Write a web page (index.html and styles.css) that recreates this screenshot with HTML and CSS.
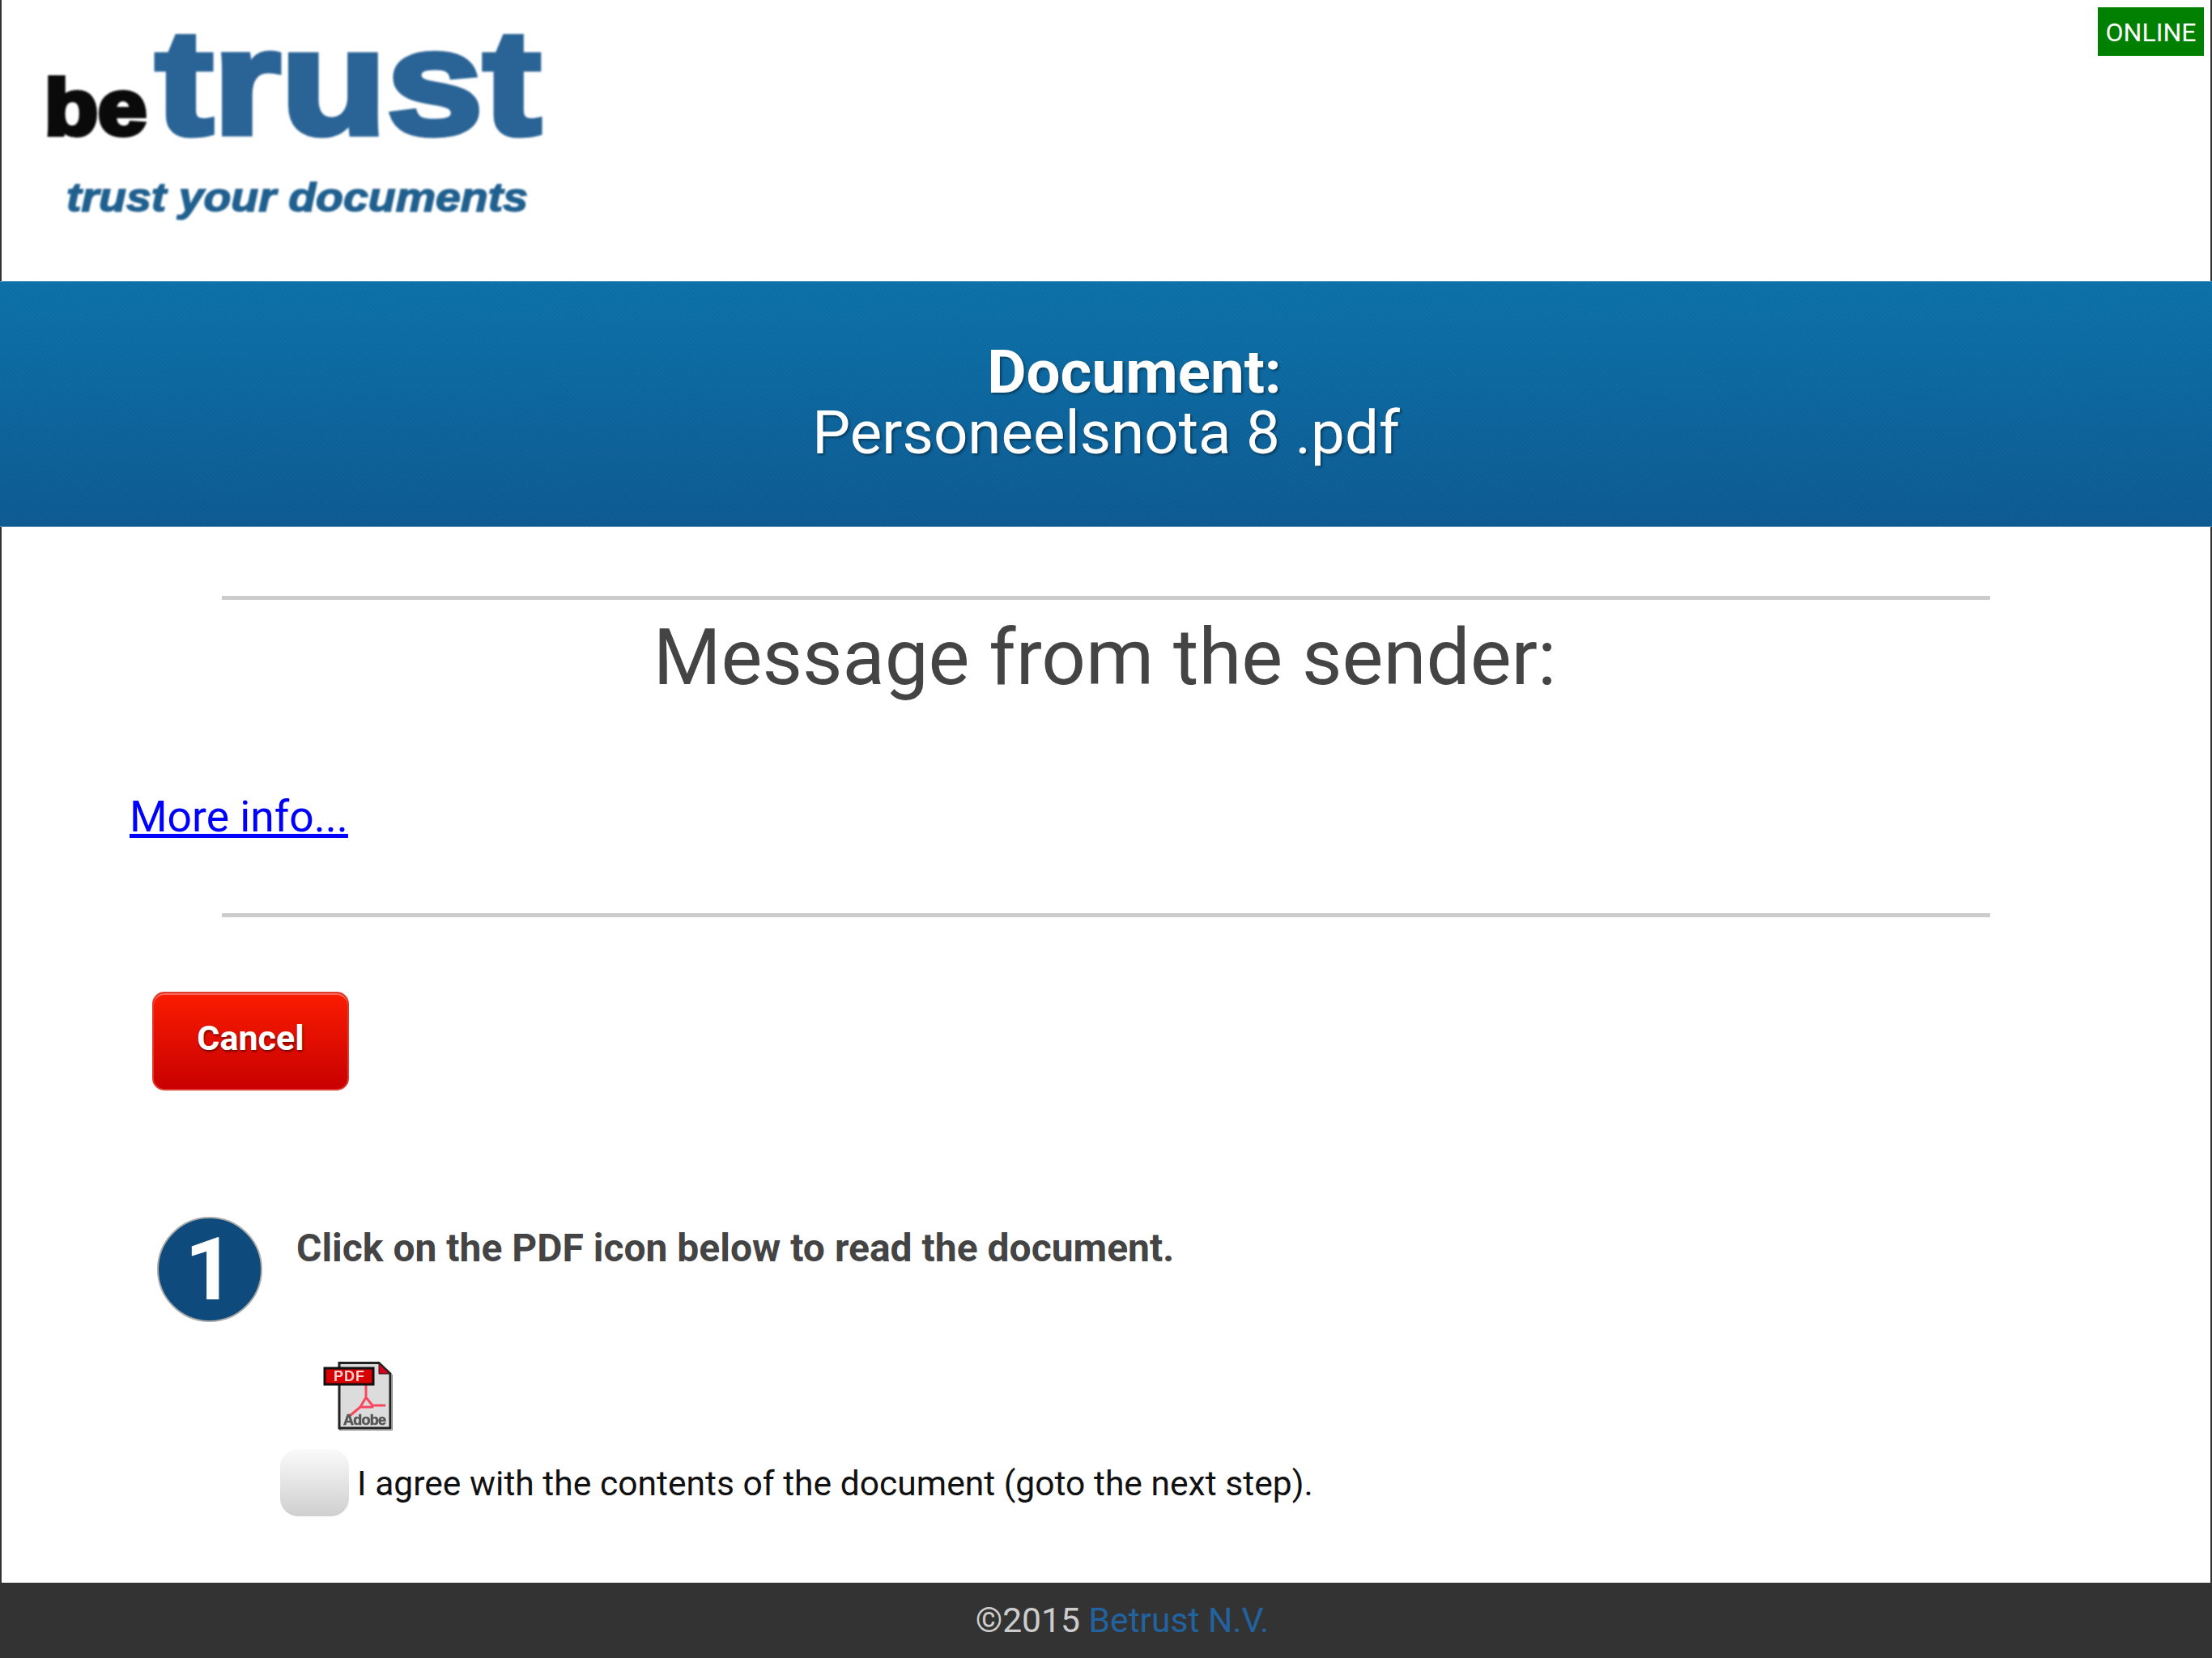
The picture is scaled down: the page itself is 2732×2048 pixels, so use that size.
FILE: index.html
```html
<!DOCTYPE HTML>
<html>
    <head>
        <title>Betrust</title>
        <link rel="stylesheet" href="styles.css">
    </head>

    <body>
        <header class="top">
            <svg class="logo" viewBox="0 0 720 346" width="720" height="346">
                <text class="logo-be" x="55" y="166" textLength="126" lengthAdjust="spacingAndGlyphs">be</text>
                <text class="logo-trust" x="192" y="165" textLength="476" lengthAdjust="spacingAndGlyphs">trust</text>
                <text class="logo-tag" x="82" y="261" textLength="570" lengthAdjust="spacingAndGlyphs">trust your documents</text>
            </svg>
            <div class="status">ONLINE</div>
        </header>

        <div class="band">
            <div class="band-label">Document:</div>
            <div class="band-name">Personeelsnota 8 .pdf</div>
        </div>

        <main class="content">
            <div class="message">
                <h1>Message from the sender:</h1>
                <a class="more" href="#">More info...</a>
            </div>

            <button class="cancel" type="button">Cancel</button>

            <div class="step">
                <div class="step-num">1</div>
                <div class="step-text">Click on the PDF icon below to read the document.</div>
            </div>

            <a class="pdf" href="#">
                <svg viewBox="0 0 86 85" width="86" height="85">
                    <path d="M21 4V85H86V16" fill="none" stroke="#888" stroke-width="2"/>
                    <path d="M20 1.500H69L83 15V82H20Z" fill="#dcdcdc" stroke="#222" stroke-width="3"/>
                    <path d="M69 2L82 15H69Z" fill="#d8001c" stroke="#222" stroke-width="1"/>
                    <path d="M53 29V44M53 44L46 56M53 44L61 54M46 56H61M46 56L34 66M61 54H76" fill="none" stroke="#f8485f" stroke-width="3" stroke-linecap="round"/>
                    <rect x="2" y="8" width="60" height="20" fill="#d80000" stroke="#111" stroke-width="3"/>
                    <text class="pdf-flag" x="13" y="24" textLength="38">PDF</text>
                    <text class="pdf-adobe" x="25" y="78" textLength="53">Adobe</text>
                </svg>
            </a>

            <label class="agree">
                <input type="checkbox">
                <span>I agree with the contents of the document (goto the next step).</span>
            </label>
        </main>

        <footer class="foot">©2015 <a href="#">Betrust N.V.</a></footer>
    </body>
</html>
```

FILE: styles.css
```css
* {
    box-sizing: border-box;
}
body {
    margin: 0;
    height: 2048px;
    display: flex;
    flex-direction: column;
    background: white;
    font-family: Roboto, sans-serif;
    color: #444;
}

/* top with logo */
.top {
    position: relative;
    height: 347px;
    border-left: 2px solid #333;
    border-right: 2px solid #333;
}
.logo {
    display: block;
    margin-left: -2px;
    filter: blur(0.8px);
}
.logo text {
    font-family: "Liberation Sans", sans-serif;
    font-weight: bold;
}
.logo-be {
    font-size: 96px;
    fill: #0a0a0a;
    stroke: #0a0a0a;
    stroke-width: 6px;
}
.logo-trust {
    font-size: 184px;
    fill: #2a6496;
    stroke: #2a6496;
    stroke-width: 7px;
}
.logo-tag {
    font-size: 50px;
    font-style: italic;
    fill: #20608f;
    stroke: #20608f;
    stroke-width: 1.500px;
}
.status {
    position: absolute;
    top: 9px;
    right: 8px;
    width: 131px;
    height: 60px;
    background: #008000;
    color: white;
    font-size: 32px;
    line-height: 62px;
    text-align: center;
}

/* blue document band */
.band {
    height: 304px;
    display: flex;
    flex-direction: column;
    justify-content: center;
    align-items: center;
    border-top: 1px solid #5a9fc6;
    border-bottom: 1px solid #5a8fb5;
    background:
        repeating-linear-gradient(45deg, rgba(0, 0, 0, 0.03) 0 2px, transparent 2px 4px),
        linear-gradient(#0d73ab, #0e5c94);
    color: white;
    font-size: 74.500px;
    line-height: 75px;
    text-shadow: 2px 2px 3px rgba(0, 0, 0, 0.4);
}
.band-label {
    font-weight: bold;
    padding-left: 70px;
    margin-top: -2px;
}
.band-name {
    margin-bottom: 2px;
}

.content {
    flex: 1;
    border-left: 2px solid #333;
    border-right: 2px solid #333;
    padding-top: 85px;
}

/* message from sender */
.message {
    width: 2184px;
    margin-left: 272px;
    height: 397px;
    border-top: 5px solid #ccc;
    border-bottom: 5px solid #ccc;
}
.message h1 {
    margin: 0;
    padding: 1px 3px 0 0;
    font-size: 96px;
    font-weight: normal;
    line-height: 140px;
    text-align: center;
}
.more {
    display: block;
    width: max-content;
    margin: 92px 0 0 -114px;
    font-size: 53.400px;
    line-height: 70px;
    color: #00f;
}

.cancel {
    display: block;
    width: 243px;
    height: 122px;
    margin: 92px 0 0 186px;
    padding: 0 0 8px;
    border: 2px solid #df3a2c;
    border-radius: 15px;
    background: linear-gradient(#fb1c00, #c80000);
    box-shadow: inset 0 2px 0 rgba(255, 255, 255, 0.35);
    color: white;
    font-family: Roboto, sans-serif;
    font-size: 43px;
    font-weight: bold;
    text-shadow: 1px 2px 3px rgba(0, 0, 0, 0.5);
}

/* step one */
.step {
    display: flex;
    gap: 42px;
    margin: 156px 0 0 192px;
}
.step-num {
    width: 130px;
    height: 130px;
    border: 2px solid #aaa;
    border-radius: 50%;
    background: #0e4a7c;
    color: white;
    font-size: 108px;
    font-weight: bold;
    line-height: 126px;
    text-align: center;
}
.step-text {
    margin-top: 7px;
    font-size: 48px;
    font-weight: bold;
    line-height: 64px;
}
.pdf {
    display: block;
    width: 86px;
    margin: 49px 0 0 397px;
}
.pdf svg {
    display: block;
    filter: blur(0.5px);
}
.pdf-flag {
    font-family: "Liberation Sans", sans-serif;
    font-size: 18px;
    font-weight: bold;
    fill: #f5d6d6;
}
.pdf-adobe {
    font-family: "Liberation Sans", sans-serif;
    font-size: 18px;
    font-weight: bold;
    fill: #555;
    stroke: #555;
    stroke-width: 0.600px;
}

.agree {
    display: flex;
    align-items: center;
    gap: 10px;
    margin: 23px 0 0 344px;
    color: #111;
    font-size: 42.600px;
}
.agree input {
    appearance: none;
    width: 85px;
    height: 83px;
    margin: 0;
    border-radius: 22px;
    background: linear-gradient(#fafafa, #cfcfcf);
}

.foot {
    height: 93px;
    background: #333;
    color: #ccc;
    font-size: 42.600px;
    line-height: 93px;
    text-align: center;
    padding-left: 40px;
}
.foot a {
    color: #22639f;
    text-decoration: none;
}
```
